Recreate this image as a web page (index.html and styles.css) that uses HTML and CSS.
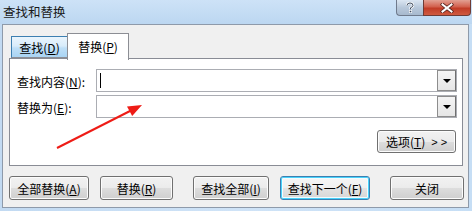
FILE: index.html
```html
<!DOCTYPE html>
<html>
<head>
<meta charset="utf-8">
<link rel="stylesheet" href="styles.css">
</head>
<body>
<div class="window">
  <div class="titlebar">
    <div class="title">查找和替换</div>
    <div class="caption-btns">
      <div class="cap help">
        <svg width="10" height="11" viewBox="0 0 10 11"><path d="M2 3.5 Q2 1 5 1 Q8 1 8 3.3 Q8 5 5.5 5.8 L5.5 7.3" fill="none" stroke="#fff" stroke-width="2.2"/><path d="M2 3.5 Q2 1 5 1 Q8 1 8 3.3 Q8 5 5.5 5.8 L5.5 7.3" fill="none" stroke="#3d4a5c" stroke-width="1"/><rect x="4.3" y="8.5" width="2.4" height="2.2" fill="#3d4a5c" stroke="#fff" stroke-width="0.6"/></svg>
      </div>
      <div class="cap close">
        <svg width="14" height="10" viewBox="0 0 14 10"><path d="M2.5 1.5 L11.5 8.5 M11.5 1.5 L2.5 8.5" stroke="#5a2620" stroke-width="3.6" stroke-linecap="square"/><path d="M2.5 1.5 L11.5 8.5 M11.5 1.5 L2.5 8.5" stroke="#fff" stroke-width="2" stroke-linecap="square"/></svg>
      </div>
    </div>
  </div>
  <div class="client">
    <div class="tabs">
      <div class="tab inactive">查找(<u>D</u>)</div>
      <div class="tab active">替换(<u>P</u>)</div>
    </div>
    <div class="panel">
      <div class="row first">
        <div class="label">查找内容(<u>N</u>):</div>
        <div class="combo"><span class="caret"></span><span class="drop"><span class="tri"></span></span></div>
      </div>
      <div class="row">
        <div class="label">替换为(<u>E</u>):</div>
        <div class="combo"><span class="drop"><span class="tri"></span></span></div>
      </div>
      <div class="opt-row">
        <div class="btn options">选项(<u>T</u>)<span class="more">&gt; &gt;</span></div>
      </div>
    </div>
    <div class="actions">
      <div class="btn b1">全部替换(<u>A</u>)</div>
      <div class="btn b2">替换(<u>R</u>)</div>
      <div class="btn b3">查找全部(<u>I</u>)</div>
      <div class="btn b4 focused">查找下一个(<u>F</u>)</div>
      <div class="btn b5">关闭</div>
    </div>
  </div>
  <svg class="arrow" width="472" height="211" viewBox="0 0 472 211">
    <line x1="57" y1="148" x2="131" y2="110.5" stroke="#ee1c16" stroke-width="2"/>
    <polygon points="142,105 132.2,116 127,106.6" fill="#ee1c16"/>
  </svg>
</div>
</body>
</html>
```
FILE: styles.css
```css
* { box-sizing: border-box; }
html, body { margin: 0; padding: 0; }
body {
  width: 472px;
  height: 211px;
  overflow: hidden;
  font-family: "Noto Sans CJK SC", "Liberation Sans", sans-serif;
  font-size: 12px;
  color: #000;
}
u { text-decoration: underline; text-underline-offset: 1px; }
.window {
  position: relative;
  width: 472px;
  height: 211px;
  background: linear-gradient(90deg, #c2daf2 0%, #cfe3f7 50%, #c6def5 100%);
  display: flex;
  flex-direction: column;
}
.titlebar {
  height: 24px;
  display: flex;
  justify-content: space-between;
  align-items: flex-start;
  background: linear-gradient(180deg, #cde2f7 0%, #bcd7f1 100%);
}
.title {
  padding-left: 3px;
  line-height: 24px;
  font-size: 12.5px;
  color: #1a1a1a;
}
.caption-btns {
  display: flex;
  margin-right: 1px;
}
.cap {
  height: 16px;
  display: flex;
  align-items: center;
  justify-content: center;
  border: 1px solid #6f7a8c;
  border-top: none;
}
.help {
  width: 27px;
  border-radius: 0 0 0 4px;
  border-right: none;
  background: linear-gradient(180deg, #dbe6f2 0%, #b8c8da 50%, #a7b9ce 100%);
}
.close {
  width: 48px;
  border-radius: 0 0 4px 0;
  border-color: #6e3b35;
  background: linear-gradient(180deg, #e2a093 0%, #d2604d 45%, #c13c27 55%, #cf5a3f 100%);
}
.client {
  margin: 0 3px 3px 2px;
  flex: 1;
  background: #f0f0f0;
  border: 1px solid #8e9aaa;
  padding: 8px 0 0 6px;
  display: flex;
  flex-direction: column;
}
.tabs {
  display: flex;
  align-items: flex-end;
  height: 25px;
  padding-left: 2px;
  position: relative;
  z-index: 1;
}
.tab {
  display: flex;
  align-items: center;
  justify-content: center;
  border: 1px solid #8c8e94;
  border-bottom: none;
}
.tab.inactive {
  width: 56px;
  height: 22px;
  border-right: none;
  background: linear-gradient(180deg, #eaf5fd 0%, #d8ecfa 45%, #bedff7 55%, #a9d4f3 100%);
  border-color: #3c7fb1;
  border-bottom: 1px solid #8c8e94;
  padding-top: 1px;
}
.tab.active {
  width: 62px;
  height: 27px;
  margin-bottom: -2px;
  background: #fff;
  padding-bottom: 2px;
}
.panel {
  width: 454px;
  height: 108px;
  background: #fff;
  border: 1px solid #898c95;
  padding: 10px 5px 0 7px;
  display: flex;
  flex-direction: column;
}
.row {
  display: flex;
  align-items: center;
  justify-content: space-between;
  height: 23px;
}
.row + .row { margin-top: 3px; }
.label { padding-top: 1px; }
.combo {
  position: relative;
  width: 361px;
  height: 23px;
  border: 1px solid #abadb3;
  background: #fff;
  display: flex;
  align-items: center;
  justify-content: space-between;
}
.caret {
  width: 1px;
  height: 15px;
  background: #000;
  margin-left: 3px;
}
.drop {
  margin-left: auto;
  width: 19px;
  height: 21px;
  border: 1px solid #8d8d8d;
  border-right-color: #6f6f6f;
  background: linear-gradient(180deg, #f4f4f4 0%, #e6e6e6 100%);
  display: flex;
  align-items: center;
  justify-content: center;
}
.tri {
  width: 0;
  height: 0;
  border-left: 4px solid transparent;
  border-right: 4px solid transparent;
  border-top: 4px solid #000;
  margin-top: 1px;
}
.opt-row {
  display: flex;
  justify-content: flex-end;
  margin-top: 12px;
  padding-right: 1px;
}
.btn {
  height: 24px;
  display: flex;
  align-items: center;
  justify-content: center;
  border: 1px solid #707070;
  border-radius: 3px;
  background: linear-gradient(180deg, #f2f2f2 0%, #ebebeb 50%, #dddddd 51%, #cfcfcf 100%);
  box-shadow: inset 0 0 0 1px #fcfcfc;
  white-space: nowrap;
}
.options {
  width: 79px;
  height: 23px;
}
.more {
  margin-left: 6px;
  font-family: "Liberation Sans", sans-serif;
  font-size: 11px;
}
.actions {
  display: flex;
  margin-top: 10px;
}
.b1 { width: 80px; margin-left: 0; }
.b2 { width: 73px; margin-left: 11px; }
.b3 { width: 76px; margin-left: 20px; }
.b4 { width: 90px; margin-left: 11px; }
.b5 { width: 74px; margin-left: 20px; }
.btn.focused {
  border-color: #3c7fb1;
  box-shadow: inset 0 0 0 1px #48d2fb, inset 0 0 0 2px #f4fbfe;
  background: linear-gradient(180deg, #f6f6f6 0%, #efefef 50%, #e3e3e3 51%, #d6d6d6 100%);
}
.arrow {
  position: absolute;
  left: 0;
  top: 0;
  pointer-events: none;
}
```
